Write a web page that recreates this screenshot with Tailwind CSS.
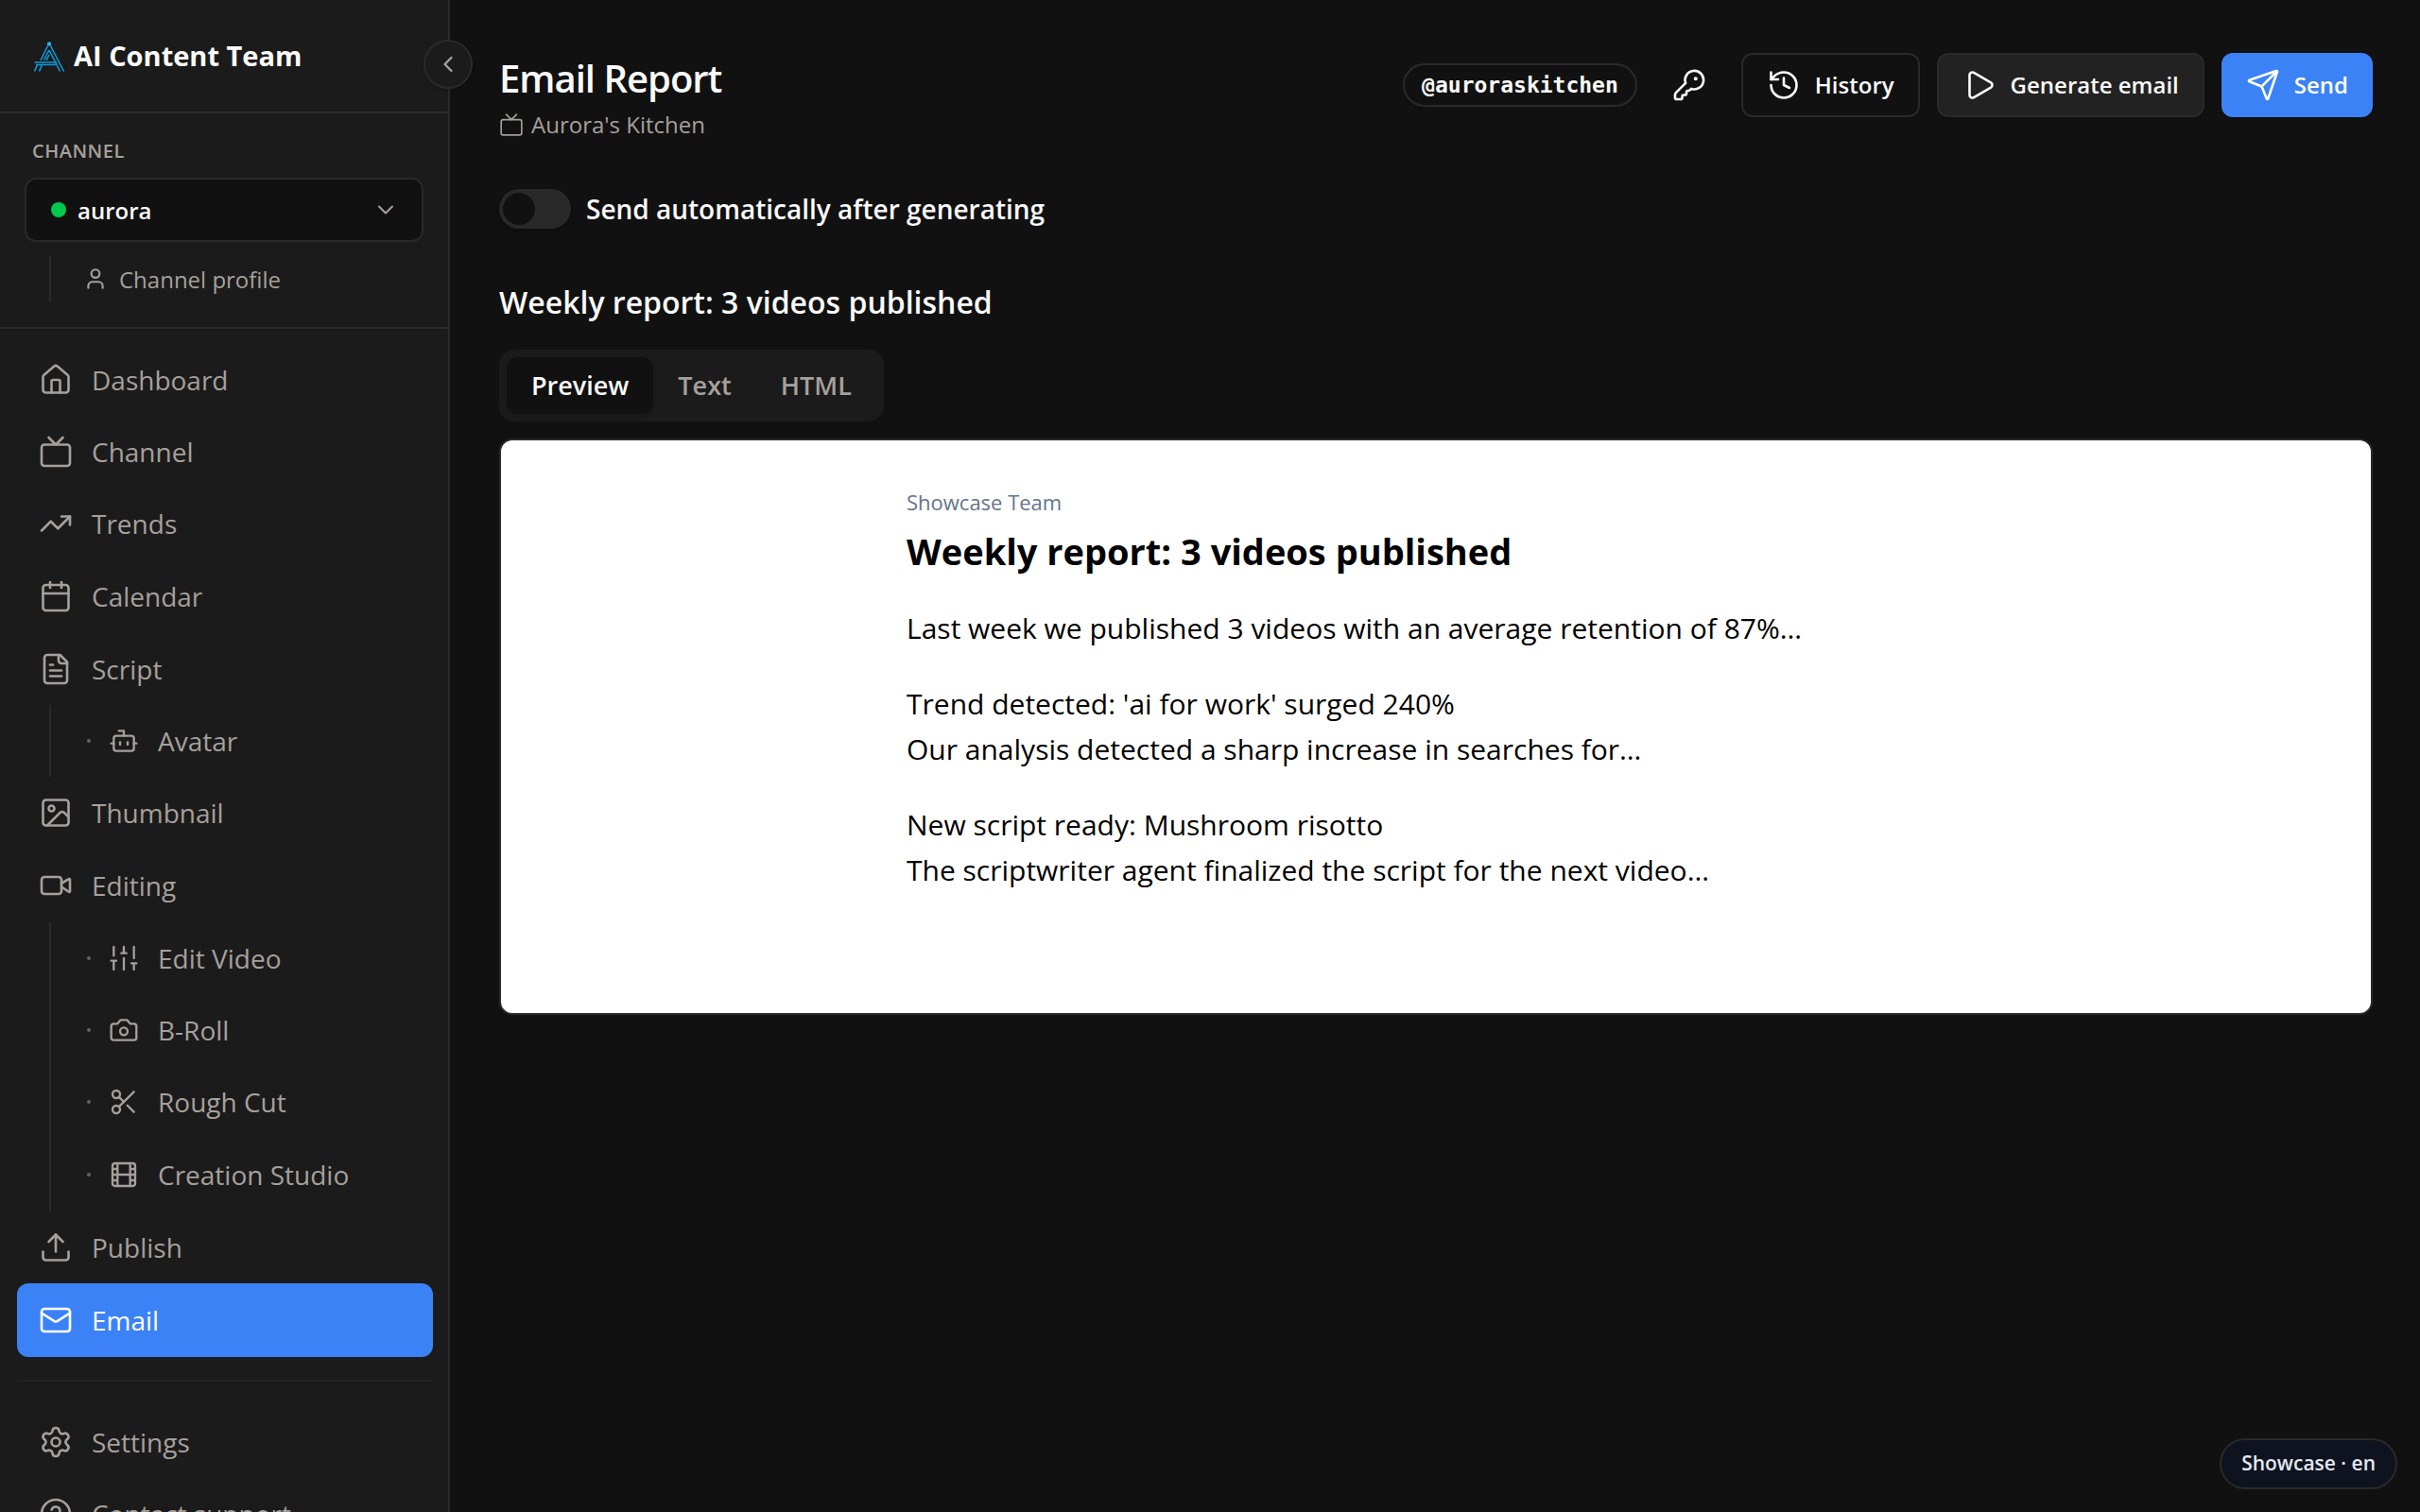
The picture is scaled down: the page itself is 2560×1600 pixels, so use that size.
<!DOCTYPE html>
<html lang="en">
<head>
    <meta charset="UTF-8">
    <meta name="viewport" content="width=device-width, initial-scale=1.0">
    <title>Email Report - AI Content Team</title>
    <!-- Tailwind CSS -->
    <script src="https://cdn.jsdelivr.net/npm/@tailwindcss/browser@4"></script>
</head>
<body class="flex h-screen overflow-hidden bg-[#111111] font-['Segoe_UI','Open_Sans',sans-serif] text-neutral-50">
    <!-- Icon sprite -->
    <svg class="hidden" xmlns="http://www.w3.org/2000/svg">
        <symbol id="i-home" viewBox="0 0 24 24"><path d="M15 21v-8a1 1 0 0 0-1-1h-4a1 1 0 0 0-1 1v8"/><path d="M3 10a2 2 0 0 1 .709-1.528l7-5.999a2 2 0 0 1 2.582 0l7 5.999A2 2 0 0 1 21 10v9a2 2 0 0 1-2 2H5a2 2 0 0 1-2-2z"/></symbol>
        <symbol id="i-tv" viewBox="0 0 24 24"><path d="m17 2-5 5-5-5"/><rect width="20" height="15" x="2" y="7" rx="2"/></symbol>
        <symbol id="i-trend" viewBox="0 0 24 24"><path d="M16 7h6v6"/><path d="m22 7-8.500 8.500-5-5L2 17"/></symbol>
        <symbol id="i-calendar" viewBox="0 0 24 24"><path d="M8 2v4"/><path d="M16 2v4"/><rect width="18" height="18" x="3" y="4" rx="2"/><path d="M3 10h18"/></symbol>
        <symbol id="i-script" viewBox="0 0 24 24"><path d="M15 2H6a2 2 0 0 0-2 2v16a2 2 0 0 0 2 2h12a2 2 0 0 0 2-2V7Z"/><path d="M14 2v4a2 2 0 0 0 2 2h4"/><path d="M10 9H8"/><path d="M16 13H8"/><path d="M16 17H8"/></symbol>
        <symbol id="i-bot" viewBox="0 0 24 24"><path d="M12 8V4H8"/><rect width="16" height="12" x="4" y="8" rx="2"/><path d="M2 14h2"/><path d="M20 14h2"/><path d="M15 13v2"/><path d="M9 13v2"/></symbol>
        <symbol id="i-image" viewBox="0 0 24 24"><rect width="18" height="18" x="3" y="3" rx="2"/><circle cx="9" cy="9" r="2"/><path d="m21 15-3.086-3.086a2 2 0 0 0-2.828 0L6 21"/></symbol>
        <symbol id="i-video" viewBox="0 0 24 24"><path d="m16 13 5.223 3.482a.5.5 0 0 0 .777-.416V7.870a.5.5 0 0 0-.752-.432L16 10.500"/><rect x="2" y="6" width="14" height="12" rx="2"/></symbol>
        <symbol id="i-sliders" viewBox="0 0 24 24"><path d="M4 21v-7M4 10V3M12 21v-9M12 8V3M20 21v-5M20 12V3M2 14h4M10 8h4M18 16h4"/></symbol>
        <symbol id="i-camera" viewBox="0 0 24 24"><path d="M14.500 4h-5L7 7H4a2 2 0 0 0-2 2v9a2 2 0 0 0 2 2h16a2 2 0 0 0 2-2V9a2 2 0 0 0-2-2h-3l-2.500-3z"/><circle cx="12" cy="13" r="3"/></symbol>
        <symbol id="i-scissors" viewBox="0 0 24 24"><circle cx="6" cy="6" r="3"/><path d="M8.120 8.120 12 12"/><path d="M20 4 8.120 15.880"/><circle cx="6" cy="18" r="3"/><path d="M14.800 14.800 20 20"/></symbol>
        <symbol id="i-film" viewBox="0 0 24 24"><rect width="18" height="18" x="3" y="3" rx="2"/><path d="M7 3v18M3 7.500h4M3 12h18M3 16.500h4M17 3v18M17 7.500h4M17 16.500h4"/></symbol>
        <symbol id="i-upload" viewBox="0 0 24 24"><path d="M12 3v12"/><path d="m17 8-5-5-5 5"/><path d="M21 15v4a2 2 0 0 1-2 2H5a2 2 0 0 1-2-2v-4"/></symbol>
        <symbol id="i-mail" viewBox="0 0 24 24"><path d="m22 7-8.991 5.727a2 2 0 0 1-2.009 0L2 7"/><rect x="2" y="4" width="20" height="16" rx="2"/></symbol>
        <symbol id="i-settings" viewBox="0 0 24 24"><path d="M9.671 4.136a2.340 2.340 0 0 1 4.659 0 2.340 2.340 0 0 0 3.319 1.915 2.340 2.340 0 0 1 2.330 4.033 2.340 2.340 0 0 0 0 3.831 2.340 2.340 0 0 1-2.330 4.033 2.340 2.340 0 0 0-3.319 1.915 2.340 2.340 0 0 1-4.659 0 2.340 2.340 0 0 0-3.320-1.915 2.340 2.340 0 0 1-2.330-4.033 2.340 2.340 0 0 0 0-3.831A2.340 2.340 0 0 1 6.350 6.051a2.340 2.340 0 0 0 3.319-1.915"/><circle cx="12" cy="12" r="3"/></symbol>
        <symbol id="i-help" viewBox="0 0 24 24"><circle cx="12" cy="12" r="10"/><path d="M9.090 9a3 3 0 0 1 5.830 1c0 2-3 3-3 3"/><path d="M12 17h.01"/></symbol>
        <symbol id="i-user" viewBox="0 0 24 24"><path d="M19 21v-2a4 4 0 0 0-4-4H9a4 4 0 0 0-4 4v2"/><circle cx="12" cy="7" r="4"/></symbol>
        <symbol id="i-down" viewBox="0 0 24 24"><path d="m6 9 6 6 6-6"/></symbol>
        <symbol id="i-left" viewBox="0 0 24 24"><path d="m15 18-6-6 6-6"/></symbol>
        <symbol id="i-key" viewBox="0 0 24 24"><path d="M2.586 17.414A2 2 0 0 0 2 18.828V21a1 1 0 0 0 1 1h3a1 1 0 0 0 1-1v-1a1 1 0 0 1 1-1h1a1 1 0 0 0 1-1v-1a1 1 0 0 1 1-1h.172a2 2 0 0 0 1.414-.586l.814-.814a6.500 6.500 0 1 0-4-4z"/><circle cx="16.500" cy="7.500" r=".5" fill="currentColor"/></symbol>
        <symbol id="i-history" viewBox="0 0 24 24"><path d="M3 12a9 9 0 1 0 9-9 9.750 9.750 0 0 0-6.740 2.740L3 8"/><path d="M3 3v5h5"/><path d="M12 7v5l4 2"/></symbol>
        <symbol id="i-play" viewBox="0 0 24 24"><path d="M5 5a2 2 0 0 1 3.008-1.728l11.997 6.998a2 2 0 0 1 .003 3.458l-12 7A2 2 0 0 1 5 19z"/></symbol>
        <symbol id="i-send" viewBox="0 0 24 24"><path d="M14.536 21.686a.5.5 0 0 0 .937-.024l6.500-19a.496.496 0 0 0-.635-.635l-19 6.500a.5.5 0 0 0-.024.937l7.930 3.180a2 2 0 0 1 1.112 1.110z"/><path d="m21.854 2.147-10.940 10.939"/></symbol>
    </svg>

    <!-- Sidebar -->
    <aside class="relative z-10 flex w-[476px] shrink-0 flex-col border-r-2 border-[#2a2a2a] bg-[#1b1b1b] text-[#a6a09b]">
        <div class="flex h-[120px] shrink-0 items-center gap-2 border-b-2 border-[#2a2a2a] px-[34px]">
            <svg class="size-9" viewBox="0 0 36 36" fill="none" stroke="#0b9bdc" stroke-width="1.600">
                <circle cx="18" cy="5.500" r="2.200" fill="#2fb0e4" stroke="none"/>
                <path d="M16.500 7.500 9 23M19.500 7.500 33.500 34.500M18 12l-5.500 10.500M18 12 29.500 34.500M18 17l-3 6M2.500 25H26M4 27.500h21M5.500 27.500l-3 7M10.500 27.500l-3 7"/>
            </svg>
            <span class="text-[29px] font-bold text-neutral-50">AI Content Team</span>
        </div>

        <!-- Channel picker -->
        <div class="flex shrink-0 flex-col border-b-2 border-[#2a2a2a] px-[26px] pt-[26px] pb-[26px]">
            <span class="mb-[14px] px-2 text-[20px] leading-7 font-semibold tracking-wide uppercase">Channel</span>
            <button type="button" class="flex h-[68px] items-center gap-3 rounded-xl border-2 border-[#2a2a2a] bg-[#111111] pr-6 pl-[26px] text-[24px] font-semibold text-neutral-50">
                <span class="size-4 rounded-full bg-[#00c950]"></span>
                <span class="flex-1 pt-[2px] text-left">aurora</span>
                <svg class="size-7 fill-none stroke-[#a6a09b] stroke-[1.75]" stroke-linecap="round" stroke-linejoin="round"><use href="#i-down"/></svg>
            </button>
            <a href="#" class="mt-[14px] ml-[26px] flex h-[50px] items-center gap-3 border-l-2 border-[#2a2a2a] pl-[34px] text-[24px]">
                <svg class="size-[26px] fill-none stroke-current stroke-2" stroke-linecap="round" stroke-linejoin="round"><use href="#i-user"/></svg>
                <span class="pt-[2px]">Channel profile</span>
            </a>
        </div>

        <!-- Navigation -->
        <nav class="flex min-h-0 flex-1 flex-col overflow-hidden pt-4 pr-4 pl-[18px] text-[28px] *:shrink-0 [&_svg]:fill-none [&_svg]:stroke-current [&_svg]:stroke-[1.75]">
            <a href="#" class="flex h-[76px] items-center gap-5 px-[23px]"><svg class="size-9" stroke-linecap="round" stroke-linejoin="round"><use href="#i-home"/></svg>Dashboard</a>
            <a href="#" class="flex h-[76px] items-center gap-5 px-[23px]"><svg class="size-9" stroke-linecap="round" stroke-linejoin="round"><use href="#i-tv"/></svg>Channel</a>
            <a href="#" class="flex h-[76px] items-center gap-5 px-[23px]"><svg class="size-9" stroke-linecap="round" stroke-linejoin="round"><use href="#i-trend"/></svg>Trends</a>
            <a href="#" class="flex h-[78px] items-center gap-5 px-[23px]"><svg class="size-9" stroke-linecap="round" stroke-linejoin="round"><use href="#i-calendar"/></svg>Calendar</a>
            <a href="#" class="flex h-[76px] items-center gap-5 px-[23px]"><svg class="size-9" stroke-linecap="round" stroke-linejoin="round"><use href="#i-script"/></svg>Script</a>
            <div class="ml-[34px] border-l-2 border-[#2a2a2a]">
                <a href="#" class="flex h-[76px] items-center pl-[38px]"><span class="mr-[19px] size-1 rounded-full bg-[#66625f]"></span><svg class="mr-5 size-8" stroke-linecap="round" stroke-linejoin="round"><use href="#i-bot"/></svg>Avatar</a>
            </div>
            <a href="#" class="flex h-[76px] items-center gap-5 px-[23px]"><svg class="size-9" stroke-linecap="round" stroke-linejoin="round"><use href="#i-image"/></svg>Thumbnail</a>
            <a href="#" class="flex h-[78px] items-center gap-5 px-[23px]"><svg class="size-9" stroke-linecap="round" stroke-linejoin="round"><use href="#i-video"/></svg>Editing</a>
            <div class="ml-[34px] border-l-2 border-[#2a2a2a]">
                <a href="#" class="flex h-[76px] items-center pl-[38px]"><span class="mr-[19px] size-1 rounded-full bg-[#66625f]"></span><svg class="mr-5 size-8" stroke-linecap="round" stroke-linejoin="round"><use href="#i-sliders"/></svg>Edit Video</a>
                <a href="#" class="flex h-[76px] items-center pl-[38px]"><span class="mr-[19px] size-1 rounded-full bg-[#66625f]"></span><svg class="mr-5 size-8" stroke-linecap="round" stroke-linejoin="round"><use href="#i-camera"/></svg>B-Roll</a>
                <a href="#" class="flex h-[76px] items-center pl-[38px]"><span class="mr-[19px] size-1 rounded-full bg-[#66625f]"></span><svg class="mr-5 size-8" stroke-linecap="round" stroke-linejoin="round"><use href="#i-scissors"/></svg>Rough Cut</a>
                <a href="#" class="flex h-[78px] items-center pl-[38px]"><span class="mr-[19px] size-1 rounded-full bg-[#66625f]"></span><svg class="mr-5 size-8" stroke-linecap="round" stroke-linejoin="round"><use href="#i-film"/></svg>Creation Studio</a>
            </div>
            <a href="#" class="flex h-[76px] items-center gap-5 px-[23px]"><svg class="size-9" stroke-linecap="round" stroke-linejoin="round"><use href="#i-upload"/></svg>Publish</a>
            <a href="#" class="flex h-[78px] items-center gap-5 rounded-xl bg-[#3b82f6] px-[23px] text-white"><svg class="size-9" stroke-linecap="round" stroke-linejoin="round"><use href="#i-mail"/></svg>Email</a>
            <hr class="mt-6 mb-[26px] border-t-2 border-[#232323]">
            <a href="#" class="flex h-[76px] items-center gap-5 px-[23px]"><svg class="size-9" stroke-linecap="round" stroke-linejoin="round"><use href="#i-settings"/></svg>Settings</a>
            <a href="#" class="flex h-[76px] items-center gap-5 px-[23px]"><svg class="size-9" stroke-linecap="round" stroke-linejoin="round"><use href="#i-help"/></svg>Contact support</a>
        </nav>

        <!-- Collapse button, sits over the sidebar edge -->
        <button type="button" aria-label="Collapse sidebar" class="absolute top-[42px] -right-[26px] flex size-[52px] items-center justify-center rounded-full border-2 border-[#2a2a2a] bg-[#1b1b1b] shadow-md">
            <svg class="size-7 fill-none stroke-current stroke-2" stroke-linecap="round" stroke-linejoin="round"><use href="#i-left"/></svg>
        </button>
    </aside>

    <!-- Main content -->
    <main class="flex min-w-0 flex-1 flex-col pt-[54px] pr-[50px] pl-[52px]">
        <header class="flex items-start justify-between">
            <div>
                <h1 class="text-[40px] leading-[58px] font-semibold tracking-tight">Email Report</h1>
                <p class="flex h-10 items-center gap-2 text-[24px] text-[#a6a09b]">
                    <svg class="size-[26px] fill-none stroke-current stroke-[1.5]" stroke-linecap="round" stroke-linejoin="round"><use href="#i-tv"/></svg>
                    Aurora's Kitchen
                </p>
            </div>
            <div class="mt-[2px] flex items-center gap-[18px] text-[24px] font-semibold">
                <span class="flex h-[46px] items-center rounded-full border-2 border-[#2a2a2a] px-[18px] font-['DejaVu_Sans_Mono',monospace] text-[23px] font-bold">@auroraskitchen</span>
                <button type="button" aria-label="API keys" class="flex h-[68px] w-[74px] items-center justify-center">
                    <svg class="size-9 fill-none stroke-current stroke-[1.75]" stroke-linecap="round" stroke-linejoin="round"><use href="#i-key"/></svg>
                </button>
                <button type="button" class="flex h-[68px] items-center gap-[15px] rounded-xl border-2 border-[#2a2a2a] px-[25px] shadow-sm">
                    <svg class="size-9 fill-none stroke-current stroke-[1.75]" stroke-linecap="round" stroke-linejoin="round"><use href="#i-history"/></svg>
                    History
                </button>
                <button type="button" class="flex h-[68px] items-center gap-[15px] rounded-xl border-2 border-[#2a2a2a] bg-[#222222] px-[25px] shadow-sm">
                    <svg class="size-9 fill-none stroke-current stroke-[1.75]" stroke-linecap="round" stroke-linejoin="round"><use href="#i-play"/></svg>
                    Generate email
                </button>
                <button type="button" class="flex h-[68px] items-center gap-[15px] rounded-xl bg-[#3b82f6] px-[26px] text-white shadow-sm">
                    <svg class="size-9 fill-none stroke-current stroke-[1.75]" stroke-linecap="round" stroke-linejoin="round"><use href="#i-send"/></svg>
                    Send
                </button>
            </div>
        </header>

        <!-- Auto-send switch -->
        <label class="mt-[44px] flex h-[50px] items-center gap-4 text-[28px] font-semibold">
            <input type="checkbox" role="switch" class="h-[42px] w-[76px] appearance-none rounded-full bg-[#292929] p-1 shadow-md before:block before:size-[34px] before:rounded-full before:bg-[#111111]">
            Send automatically after generating
        </label>

        <h2 class="mt-12 text-[32px] leading-[52px] font-semibold">Weekly report: 3 videos published</h2>

        <!-- View tabs -->
        <div role="tablist" class="mt-6 flex h-[76px] items-center self-start rounded-2xl bg-[#1b1b1b] px-2 text-[27px] font-semibold text-[#a6a09b]">
            <button type="button" role="tab" aria-selected="true" class="h-[60px] rounded-xl bg-[#111111] px-[26px] text-neutral-50 shadow-sm">Preview</button>
            <button type="button" role="tab" aria-selected="false" class="h-[60px] rounded-xl px-[26px]">Text</button>
            <button type="button" role="tab" aria-selected="false" class="h-[60px] rounded-xl px-[26px]">HTML</button>
        </div>

        <!-- Email preview -->
        <article class="mt-[18px] min-h-[610px] rounded-[14px] border-2 border-[#2a2a2a] bg-white text-black">
            <div class="mx-auto flex max-w-[1120px] flex-col pt-[47px] text-[30px] leading-[48px]">
                <p class="text-[22px] leading-9 text-[#64748b]">Showcase Team</p>
                <h3 class="text-[38px] leading-[68px] font-bold">Weekly report: 3 videos published</h3>
                <p class="mt-6">Last week we published 3 videos with an average retention of 87%…</p>
                <p class="mt-8">Trend detected: 'ai for work' surged 240%<br>Our analysis detected a sharp increase in searches for…</p>
                <p class="mt-8">New script ready: Mushroom risotto<br>The scriptwriter agent finalized the script for the next video…</p>
            </div>
        </article>
    </main>

    <!-- Showcase badge -->
    <div class="fixed right-6 bottom-6 flex h-[54px] items-center rounded-full border-2 border-[#2a2a2a] bg-[#0f1320] px-[21px] text-[21px] font-semibold text-slate-200">Showcase · en</div>
</body>
</html>
